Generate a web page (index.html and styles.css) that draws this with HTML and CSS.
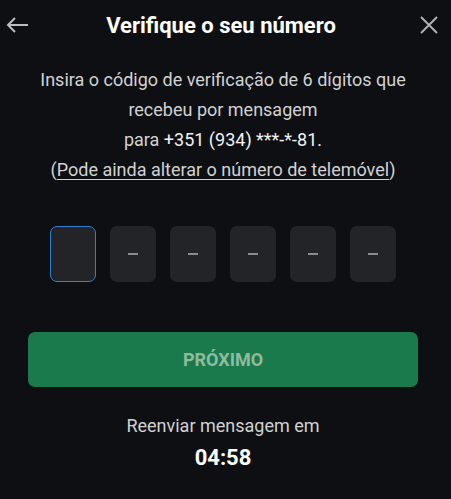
FILE: index.html
```html
<!DOCTYPE html>
<html lang="pt">
<head>
    <meta charset="UTF-8">
    <meta name="viewport" content="width=device-width, initial-scale=1.0">
    <title>Verifique o seu número</title>
    <link rel="stylesheet" href="styles.css">
</head>
<body>
    <div class="verify">
        <div class="header">
            <button class="icon-btn back" aria-label="Voltar">
                <svg width="24" height="24" viewBox="0 0 24 24"><path d="M23 12H3M10 5l-7 7 7 7" fill="none" stroke="#bdbdbd" stroke-width="2"/></svg>
            </button>
            <h1 class="title">Verifique o seu número</h1>
            <button class="icon-btn close" aria-label="Fechar">
                <svg width="20" height="20" viewBox="0 0 20 20"><path d="M2 2l16 16M18 2L2 18" fill="none" stroke="#b0b0b0" stroke-width="2"/></svg>
            </button>
        </div>
        <div class="content">
            <p class="info">
                Insira o código de verificação de 6 dígitos que recebeu por mensagem<br>
                para <span class="phone">+351 (934) ***-*-81.</span><br>
                (<a href="#" class="change">Pode ainda alterar o número de telemóvel</a>)
            </p>
            <div class="code">
                <div class="digit active"></div>
                <div class="digit"><span class="dash"></span></div>
                <div class="digit"><span class="dash"></span></div>
                <div class="digit"><span class="dash"></span></div>
                <div class="digit"><span class="dash"></span></div>
                <div class="digit"><span class="dash"></span></div>
            </div>
            <button class="next">PRÓXIMO</button>
            <div class="resend">Reenviar mensagem em</div>
            <div class="timer">04:58</div>
        </div>
    </div>
</body>
</html>
```

FILE: styles.css
```css
body {
    margin: 0;
    background-color: #0d0f12;
    font-family: Roboto, "Liberation Sans", sans-serif;
    color: #d2d2d2;
}
.verify {
    width: 451px;
    height: 499px;
}
.header {
    height: 50px;
    display: flex;
    align-items: center;
    justify-content: space-between;
    padding: 0 9px 0 4px;
}
.icon-btn {
    background: none;
    border: none;
    padding: 0;
    width: 26px;
    height: 26px;
    display: flex;
    align-items: center;
    justify-content: center;
}
.title {
    margin: 0;
    font-size: 22px;
    font-weight: 700;
    color: #fff;
    padding-right: 4px;
}
.content {
    padding: 0 33px 0 28px;
    text-align: center;
}
.info {
    margin: 15px 0 0;
    font-size: 18px;
    line-height: 30px;
}
.phone {
    color: #f2f2f2;
}
.change {
    color: #d2d2d2;
    text-decoration: underline;
    text-underline-offset: 3px;
}
.code {
    display: flex;
    justify-content: center;
    gap: 14px;
    margin-top: 41px;
}
.digit {
    width: 46px;
    height: 56px;
    box-sizing: border-box;
    background-color: #222427;
    border-radius: 7px;
    display: flex;
    align-items: center;
    justify-content: center;
}
.digit.active {
    border: 1.5px solid #2f7fd3;
}
.dash {
    width: 10px;
    height: 2px;
    background-color: #8a8a8a;
}
.next {
    display: block;
    width: 100%;
    height: 55px;
    margin-top: 50px;
    border: none;
    border-radius: 7px;
    background-color: #1a7a4b;
    color: #8fbb9f;
    font-family: Roboto, "Liberation Sans", sans-serif;
    font-size: 18px;
    font-weight: 700;
}
.resend {
    margin-top: 28px;
    font-size: 18px;
    line-height: 22px;
}
.timer {
    margin-top: 6px;
    font-size: 22px;
    font-weight: 700;
    color: #fff;
    line-height: 30px;
}
```
